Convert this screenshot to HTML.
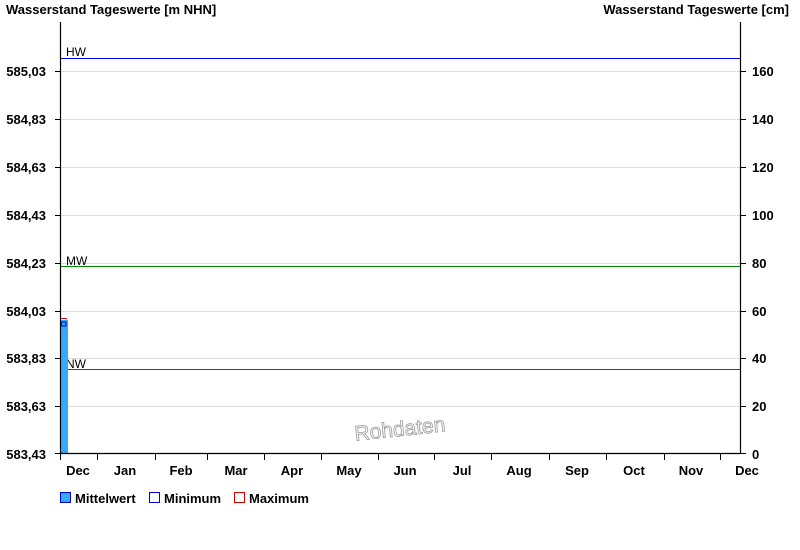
<!DOCTYPE html>
<html><head><meta charset="utf-8"><style>
html,body{margin:0;padding:0;background:#fff;width:800px;height:550px;overflow:hidden}
svg text{font-family:"Liberation Sans",Arial,sans-serif}
</style></head><body>
<svg width="800" height="550" xmlns="http://www.w3.org/2000/svg">
<g font-size="13" font-weight="bold" fill="#000">
<text x="6" y="14">Wasserstand Tageswerte [m NHN]</text>
<text x="789" y="14" text-anchor="end">Wasserstand Tageswerte [cm]</text>
</g>
<g stroke="#ddd" stroke-width="1">
<line x1="60" y1="71.5" x2="740" y2="71.5"/>
<line x1="60" y1="119.5" x2="740" y2="119.5"/>
<line x1="60" y1="167.5" x2="740" y2="167.5"/>
<line x1="60" y1="215.5" x2="740" y2="215.5"/>
<line x1="60" y1="263.5" x2="740" y2="263.5"/>
<line x1="60" y1="311.5" x2="740" y2="311.5"/>
<line x1="60" y1="358.5" x2="740" y2="358.5"/>
<line x1="60" y1="406.5" x2="740" y2="406.5"/>
</g>
<line x1="60" y1="58.5" x2="740" y2="58.5" stroke="#0000ee"/>
<line x1="60" y1="266.5" x2="740" y2="266.5" stroke="#008800"/>
<line x1="60" y1="369.5" x2="740" y2="369.5" stroke="#dd0000"/>
<g font-size="12" fill="#000">
<text x="66" y="56">HW</text>
<text x="66" y="265">MW</text>
<text x="66" y="368">NW</text>
</g>
<rect x="60" y="320" width="8" height="133" fill="#33aaff"/>
<path d="M61 322 h5 v4 h-4 z" fill="none" stroke="#0000dd" stroke-width="1"/>
<path d="M61 318.5 h5 l1 1" fill="none" stroke="#dd0000" stroke-width="1"/>
<text x="400" y="436" font-size="21" fill="#fff" stroke="#999" stroke-width="0.8" text-anchor="middle" transform="rotate(-6 400 430)">Rohdaten</text>
<g stroke="#000" stroke-width="1.2">
<line x1="60.5" y1="22" x2="60.5" y2="454"/>
<line x1="740.5" y1="22" x2="740.5" y2="454"/>
<line x1="60" y1="453.5" x2="740" y2="453.5"/>
</g>
<g stroke="#000" stroke-width="1">
<path d="M55 71.5h5M55 119.5h5M55 167.5h5M55 215.5h5M55 263.5h5M55 311.5h5M55 358.5h5M55 406.5h5M55 453.5h5"/>
<path d="M740 71.5h6M740 119.5h6M740 167.5h6M740 215.5h6M740 263.5h6M740 311.5h6M740 358.5h6M740 406.5h6M740 453.5h6"/>
<path d="M60.5 453v7M97.5 453v7M155.5 453v7M207.5 453v7M264.5 453v7M321.5 453v7M378.5 453v7M434.5 453v7M491.5 453v7M549.5 453v7M606.5 453v7M664.5 453v7M720.5 453v7"/>
</g>
<g font-size="13" font-weight="bold" fill="#000" text-anchor="end">
<text x="46" y="76">585,03</text>
<text x="46" y="124">584,83</text>
<text x="46" y="172">584,63</text>
<text x="46" y="220">584,43</text>
<text x="46" y="268">584,23</text>
<text x="46" y="316">584,03</text>
<text x="46" y="363">583,83</text>
<text x="46" y="411">583,63</text>
<text x="46" y="459">583,43</text>
</g>
<g font-size="13" font-weight="bold" fill="#000">
<text x="752" y="76">160</text>
<text x="752" y="124">140</text>
<text x="752" y="172">120</text>
<text x="752" y="220">100</text>
<text x="752" y="268">80</text>
<text x="752" y="316">60</text>
<text x="752" y="363">40</text>
<text x="752" y="411">20</text>
<text x="752" y="459">0</text>
</g>
<g font-size="13" font-weight="bold" fill="#000" text-anchor="middle">
<text x="78" y="475">Dec</text>
<text x="125" y="475">Jan</text>
<text x="181" y="475">Feb</text>
<text x="236" y="475">Mar</text>
<text x="292" y="475">Apr</text>
<text x="349" y="475">May</text>
<text x="405" y="475">Jun</text>
<text x="462" y="475">Jul</text>
<text x="519" y="475">Aug</text>
<text x="577" y="475">Sep</text>
<text x="634" y="475">Oct</text>
<text x="691" y="475">Nov</text>
<text x="747" y="475">Dec</text>
</g>
<rect x="60.5" y="492.5" width="10" height="10" fill="#33aaff" stroke="#0000dd"/>
<rect x="149.5" y="492.5" width="10" height="10" fill="#fff" stroke="#0000dd"/>
<rect x="234.5" y="492.5" width="10" height="10" fill="#fff" stroke="#dd0000"/>
<g font-size="13" font-weight="bold" fill="#000">
<text x="75" y="503">Mittelwert</text>
<text x="164" y="503">Minimum</text>
<text x="249" y="503">Maximum</text>
</g>
</svg>
</body></html>
